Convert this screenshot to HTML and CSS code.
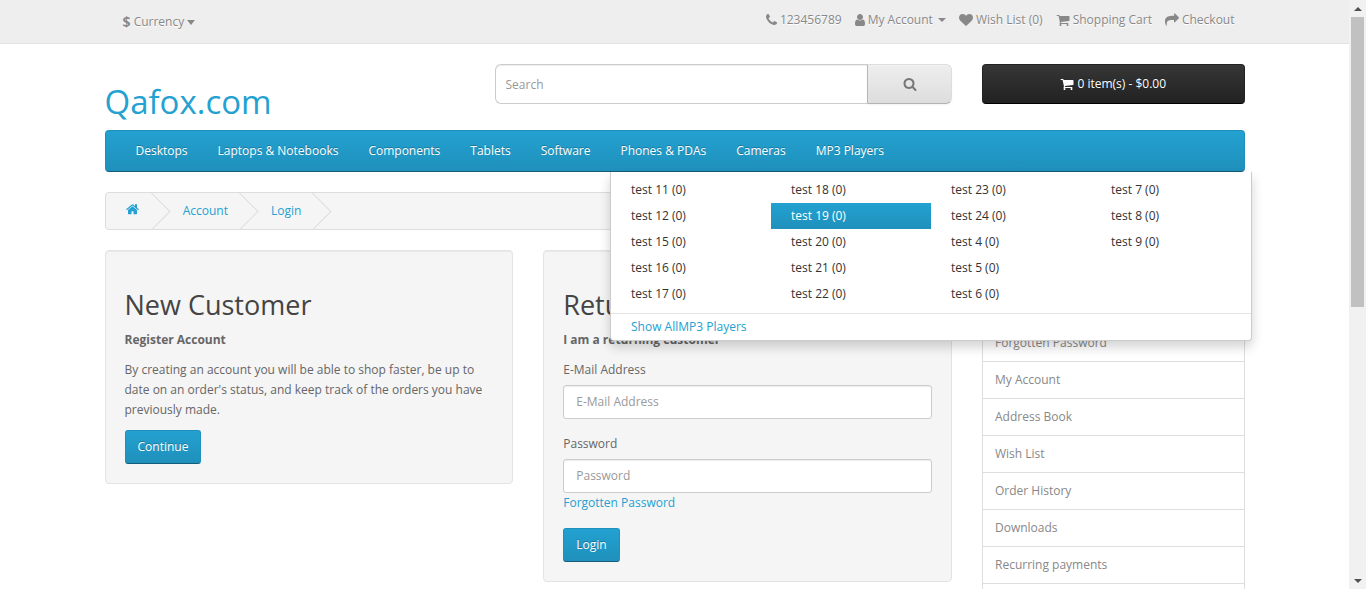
FILE: index.html
```html
<!DOCTYPE html>
<html lang="en">
<head>
  <meta charset="UTF-8">
  <title>Account Login</title>
  <link rel="stylesheet" href="styles.css">
</head>
<body>

  <svg class="icon-defs" width="0" height="0">
    <symbol id="i-phone" viewBox="192 0 1408 1792"><path d="M1600 1240q0 27-10 70.5t-21 68.5q-21 50-122 106-94 51-186 51-27 0-53-3.5t-57.5-12.5-47-14.5-55.5-20.5-49-18q-98-35-175-83-127-79-264-216t-216-264q-48-77-83-175-3-9-18-49t-20.5-55.5-14.5-47-12.5-57.5-3.5-53q0-92 51-186 56-101 106-122 25-11 68.5-21t70.5-10q14 0 21 3 18 6 53 76 11 19 30 54t35 63.5 31 53.5q3 4 17.5 25t21.5 35.5 7 28.5q0 20-28.5 50t-62 55-62 53-28.5 46q0 9 5 22.5t8.5 20.5 14 24 11.5 19q76 137 174 235t235 174q2 1 19 11.5t24 14 20.5 8.5 22.5 5q18 0 46-28.5t53-62 55-62 50-28.5q14 0 28.5 7t35.5 21.5 25 17.5q25 15 53.5 31t63.5 35 54 30q70 35 76 53 3 7 3 21z"/></symbol>
    <symbol id="i-user" viewBox="256 0 1280 1792"><path d="M1536 1399q0 109-62.5 187t-150.5 78h-854q-88 0-150.5-78t-62.5-187q0-85 8.5-160.5t31.5-152 58.5-131 94-89 134.5-34.5q131 128 313 128t313-128q76 0 134.5 34.5t94 89 58.5 131 31.5 152 8.5 160.5zm-256-887q0 159-112.5 271.5t-271.5 112.5-271.5-112.5-112.5-271.5 112.5-271.5 271.5-112.5 271.5 112.5 112.5 271.5z"/></symbol>
    <symbol id="i-heart" viewBox="0 0 1792 1792"><path d="M896 1664q-26 0-44-18l-624-602q-10-8-27.5-26t-55.5-65.5-68-97.5-53.5-121-23.5-138q0-220 127-344t351-124q62 0 126.5 21.5t120 58 95.5 68.5 76 68q36-36 76-68t95.5-68.5 120-58 126.5-21.5q224 0 351 124t127 344q0 221-229 450l-623 600q-18 18-44 18z"/></symbol>
    <symbol id="i-cart" viewBox="0 0 1792 1792"><path d="M704 1536q0 52-38 90t-90 38-90-38-38-90 38-90 90-38 90 38 38 90zm896 0q0 52-38 90t-90 38-90-38-38-90 38-90 90-38 90 38 38 90zm128-1088v512q0 24-16.5 42.5t-40.5 21.5l-1044 122q13 60 13 70 0 16-24 64h920q26 0 45 19t19 45-19 45-45 19h-1024q-26 0-45-19t-19-45q0-11 8-31.5t16-36 21.5-40 15.5-29.5l-177-823h-204q-26 0-45-19t-19-45 19-45 45-19h256q16 0 28.5 6.5t19.5 15.5 13 24.5 8 26 5.5 29.5 4.5 26h1201q26 0 45 19t19 45z"/></symbol>
    <symbol id="i-share" viewBox="0 0 1792 1792"><path d="M1792 640q0 26-19 45l-512 512q-19 19-45 19t-45-19-19-45v-256h-224q-98 0-175.5 6t-154 21.5-133 42.5-105.5 69.5-79 101-49 138-18 179.5q0 71 16 160 2 8 4 22 0 20-26 20-14 0-30-22-148-200-178-420-12-80-12-130 0-200 70-340 190-390 892-390h224v-256q0-26 19-45t45-19 45 19l512 512q19 19 19 45z"/></symbol>
    <symbol id="i-home" viewBox="64 256 1664 1344"><path d="M1472 992v480q0 26-19 45t-45 19h-384v-384h-256v384h-384q-26 0-45-19t-19-45v-480q0-1 .5-3t.5-3l575-474 575 474q1 2 1 6zm223-69l-62 74q-8 9-21 11h-3q-13 0-21-7l-692-577-692 577q-12 8-24 7-13-2-21-11l-62-74q-8-10-7-23.5t11-21.5l719-599q32-26 76-26t76 26l244 204v-195q0-14 9-23t23-9h192q14 0 23 9t9 23v408l219 182q10 8 11 21.5t-7 23.5z"/></symbol>
    <symbol id="i-search" viewBox="0 0 1792 1792"><path d="M1216 832q0-185-131.5-316.5t-316.5-131.5-316.5 131.5-131.5 316.5 131.5 316.5 316.5 131.5 316.5-131.5 131.5-316.5zm512 832q0 52-38 90t-90 38q-54 0-90-38l-343-342q-179 124-399 124-143 0-273.5-55.5t-225-150-150-225-55.5-273.5 55.5-273.5 150-225 225-150 273.5-55.5 273.5 55.5 225 150 150 225 55.5 273.5q0 220-124 399l343 343q37 37 37 90z"/></symbol>
  </svg>

  <div class="page">

    <div class="topbar">
      <div class="wrap topbar-row">
        <div class="currency"><strong>$</strong> Currency <span class="caret-big"></span></div>
        <ul class="toplinks">
          <li><svg class="icon w11"><use href="#i-phone"/></svg>123456789</li>
          <li><svg class="icon w10"><use href="#i-user"/></svg>My Account <span class="caret-small"></span></li>
          <li><svg class="icon"><use href="#i-heart"/></svg>Wish List (0)</li>
          <li><svg class="icon"><use href="#i-cart"/></svg>Shopping Cart</li>
          <li><svg class="icon"><use href="#i-share"/></svg>Checkout</li>
        </ul>
      </div>
    </div>

    <div class="wrap">

      <header class="header">
        <h1 class="logo">Qafox.com</h1>
        <div class="search">
          <input class="search-input" type="text" placeholder="Search">
          <button class="search-btn"><svg class="icon"><use href="#i-search"/></svg></button>
        </div>
        <button class="cart-btn"><svg class="icon"><use href="#i-cart"/></svg>0 item(s) - $0.00</button>
      </header>

      <nav class="menu">
        <ul class="menu-list">
          <li>Desktops</li>
          <li>Laptops &amp; Notebooks</li>
          <li>Components</li>
          <li>Tablets</li>
          <li>Software</li>
          <li>Phones &amp; PDAs</li>
          <li>Cameras</li>
          <li>MP3 Players</li>
        </ul>
        <div class="dropdown">
          <div class="dropdown-cols">
            <ul>
              <li>test 11 (0)</li>
              <li>test 12 (0)</li>
              <li>test 15 (0)</li>
              <li>test 16 (0)</li>
              <li>test 17 (0)</li>
            </ul>
            <ul>
              <li>test 18 (0)</li>
              <li class="active">test 19 (0)</li>
              <li>test 20 (0)</li>
              <li>test 21 (0)</li>
              <li>test 22 (0)</li>
            </ul>
            <ul>
              <li>test 23 (0)</li>
              <li>test 24 (0)</li>
              <li>test 4 (0)</li>
              <li>test 5 (0)</li>
              <li>test 6 (0)</li>
            </ul>
            <ul>
              <li>test 7 (0)</li>
              <li>test 8 (0)</li>
              <li>test 9 (0)</li>
            </ul>
          </div>
          <a class="see-all" href="#">Show AllMP3 Players</a>
        </div>
      </nav>

      <ul class="breadcrumb">
        <li><a href="#"><svg class="icon home"><use href="#i-home"/></svg></a></li>
        <li><a href="#">Account</a></li>
        <li><a href="#">Login</a></li>
      </ul>

      <div class="columns">
        <div class="content">
          <div class="well">
            <h2>New Customer</h2>
            <p><strong>Register Account</strong></p>
            <p>By creating an account you will be able to shop faster, be up to date on an order's status, and keep track of the orders you have previously made.</p>
            <a class="btn" href="#">Continue</a>
          </div>
          <div class="well">
            <h2>Returning Customer</h2>
            <p><strong>I am a returning customer</strong></p>
            <div class="form-group">
              <label>E-Mail Address</label>
              <input class="form-input" type="text" placeholder="E-Mail Address">
            </div>
            <div class="form-group">
              <label>Password</label>
              <input class="form-input" type="password" placeholder="Password">
              <a class="forgot" href="#">Forgotten Password</a>
            </div>
            <a class="btn" href="#">Login</a>
          </div>
        </div>

        <aside class="list-group">
          <a href="#">Login</a>
          <a href="#">Register</a>
          <a href="#">Forgotten Password</a>
          <a href="#">My Account</a>
          <a href="#">Address Book</a>
          <a href="#">Wish List</a>
          <a href="#">Order History</a>
          <a href="#">Downloads</a>
          <a href="#">Recurring payments</a>
          <a href="#">Reward Points</a>
        </aside>
      </div>

    </div>
  </div>

  <div class="scrollbar">
    <div class="arrow arrow-up"></div>
    <div class="track"><div class="thumb"></div></div>
    <div class="arrow arrow-down"></div>
  </div>

</body>
</html>
```

FILE: styles.css
```css
*{
  margin: 0;
  padding: 0;
  box-sizing: border-box;
}

html, body{
  height: 589px;
  overflow: hidden;
}

body{
  display: flex;
  font: 400 12px/20px "Open Sans", sans-serif;
  color: #666;
  background: #fff;
}

ul{
  list-style: none;
}

a{
  color: #23a1d1;
  text-decoration: none;
}

.icon-defs{
  position: absolute;
}

.page{
  flex: 1;
  min-width: 0;
}

.wrap{
  width: 1140px;
  margin: 0 auto;
}

.icon{
  width: 14px;
  height: 14px;
  fill: currentColor;
  margin-right: 3px;
  flex: none;
}

.icon.w11{
  width: 11px;
}

.icon.w10{
  width: 10px;
}

/* top bar */
.topbar{
  height: 44px;
  background: #eee;
  border-bottom: 1px solid #e2e2e2;
  margin-bottom: 20px;
  color: #888;
  text-shadow: 0 1px 0 #fff;
}

.topbar-row{
  display: flex;
  justify-content: space-between;
  padding: 0 10px 0 18px;
  height: 43px;
}

.currency{
  display: flex;
  align-items: center;
  white-space: pre;
  padding-top: 1px;
}

.currency strong{
  font-size: 14px;
}

.caret-big{
  width: 0;
  height: 0;
  border: 4.5px solid transparent;
  border-top: 5px solid #888;
  border-bottom: 0;
}

.toplinks{
  display: flex;
  gap: 13px;
  padding-bottom: 4px;
}

.toplinks li{
  display: flex;
  align-items: center;
  white-space: pre;
}

.caret-small{
  width: 0;
  height: 0;
  margin-left: 2px;
  border: 4px solid transparent;
  border-top: 4px solid #888;
  border-bottom: 0;
}

/* header */
.header{
  display: flex;
  align-items: flex-start;
  gap: 30px;
  margin-bottom: 10px;
}

.logo{
  width: 360px;
  margin-top: 20px;
  font-size: 33px;
  font-weight: 400;
  line-height: 36px;
  color: #23a1d1;
}

.search{
  width: 457.5px;
  height: 40px;
  display: flex;
}

.search-input{
  flex: 1;
  min-width: 0;
  padding: 0 10px;
  font: 12px "Open Sans", sans-serif;
  color: #555;
  border: 1px solid #ccc;
  border-right: 0;
  border-radius: 6px 0 0 6px;
  box-shadow: inset 0 1px 1px rgba(0,0,0,.075);
}

.search-input::placeholder,
.form-input::placeholder{
  color: #999;
  opacity: 1;
}

.search-btn{
  width: 85px;
  display: flex;
  align-items: center;
  justify-content: center;
  color: #777;
  background: linear-gradient(#eee, #ddd);
  border: 1px solid #ccc;
  border-color: #ddd #ddd #b3b3b3 #b7b7b7;
  border-radius: 0 6px 6px 0;
  box-shadow: inset 0 1px 0 rgba(255,255,255,.2), 0 1px 2px rgba(0,0,0,.05);
}

.search-btn .icon{
  margin-right: 0;
}

.cart-btn{
  width: 262.5px;
  height: 40px;
  display: flex;
  align-items: center;
  justify-content: center;
  font: 12px/18px "Open Sans", sans-serif;
  color: #fff;
  text-shadow: 0 -1px 0 rgba(0,0,0,.25);
  background: linear-gradient(#363636, #222);
  border: 1px solid #111;
  border-color: #222 #222 #000;
  border-radius: 4px;
}

.cart-btn .icon{
  margin-right: 3px;
}

/* menu */
.menu{
  position: relative;
  height: 42px;
  margin-bottom: 20px;
  background: linear-gradient(#23a1d1, #1f90bb);
  border: 1px solid #1f90bb;
  border-bottom-color: #145e7a;
  border-radius: 4px;
}

.menu-list{
  display: flex;
  padding-left: 15px;
}

.menu-list li{
  padding: 10px 15px;
  color: #fff;
  text-shadow: 0 -1px 0 rgba(0,0,0,.25);
  white-space: nowrap;
}

.dropdown{
  position: absolute;
  z-index: 5;
  top: 41px;
  left: 504.5px;
  width: 642px;
  background: #fff;
  border: 1px solid rgba(0,0,0,.2);
  border-top: 0;
  border-radius: 0 0 4px 4px;
  box-shadow: 0 6px 12px rgba(0,0,0,.175);
}

.dropdown-cols{
  display: flex;
  padding: 5px 0 6px;
}

.dropdown-cols ul{
  width: 160px;
  flex: none;
}

.dropdown-cols li{
  padding: 3px 20px;
  color: #333;
}

.dropdown-cols li.active{
  color: #fff;
  background: linear-gradient(#23a1d1, #1f90bb);
}

.see-all{
  display: block;
  padding: 3px 20px;
  border-top: 1px solid #e5e5e5;
}

/* breadcrumb */
.breadcrumb{
  display: block;
  height: 38px;
  margin-bottom: 20px;
  padding: 8px 0;
  background: #f5f5f5;
  border: 1px solid #ddd;
  border-radius: 4px;
  overflow: hidden;
}

.breadcrumb li{
  display: inline-block;
  position: relative;
  padding: 0 20px;
  white-space: nowrap;
}

.breadcrumb li::after{
  content: "";
  position: absolute;
  top: -3px;
  right: -5px;
  width: 26px;
  height: 26px;
  border-right: 1px solid #ddd;
  border-bottom: 1px solid #ddd;
  transform: rotate(-45deg);
}

.icon.home{
  width: 13px;
  height: 11px;
  margin: 0 1px 0 0;
  vertical-align: 0;
}

/* main columns */
.columns{
  display: flex;
  align-items: flex-start;
  gap: 30px;
}

.content{
  width: 847.5px;
  display: flex;
  align-items: flex-start;
  gap: 30px;
}

.well{
  flex: 1;
  padding: 19px;
  background: #f5f5f5;
  border: 1px solid #e3e3e3;
  border-radius: 4px;
  box-shadow: inset 0 1px 1px rgba(0,0,0,.05);
}

.well h2{
  margin: 20px 0 10px;
  font-size: 27px;
  font-weight: 400;
  line-height: 30px;
  color: #444;
}

.well p{
  margin-bottom: 10px;
}

.btn{
  display: inline-block;
  padding: 7px 12px;
  line-height: 18px;
  color: #fff;
  text-shadow: 0 -1px 0 rgba(0,0,0,.25);
  background: linear-gradient(#23a1d1, #1f90bb);
  border: 1px solid #1f90bb;
  border-bottom-color: #145e7a;
  border-radius: 3px;
}

.form-group{
  margin-bottom: 15px;
}

.form-group label{
  display: block;
  margin-bottom: 5px;
}

.form-input{
  display: block;
  width: 100%;
  height: 34px;
  padding: 5px 12px 7px;
  font: 12px "Open Sans", sans-serif;
  color: #555;
  background: #fff;
  border: 1px solid #ccc;
  border-radius: 3px;
  box-shadow: inset 0 1px 1px rgba(0,0,0,.075);
}

.forgot{
  display: block;
}

/* sidebar */
.list-group{
  width: 262.5px;
}

.list-group a{
  display: block;
  height: 38px;
  margin-bottom: -1px;
  padding: 8px 12px;
  color: #888;
  background: #fff;
  border: 1px solid #ddd;
}

/* scrollbar */
.scrollbar{
  width: 17px;
  height: 589px;
  display: flex;
  flex-direction: column;
  background: #f1f1f1;
}

.arrow{
  height: 17px;
  display: flex;
  align-items: center;
  justify-content: center;
}

.arrow::before{
  content: "";
  border: 4px solid transparent;
}

.arrow-up::before{
  border-top: 0;
  border-bottom: 4px solid #505050;
}

.arrow-down::before{
  border-bottom: 0;
  border-top: 4px solid #505050;
}

.track{
  flex: 1;
  padding: 0 2px;
}

.thumb{
  height: 290px;
  background: #c1c1c1;
}
```
